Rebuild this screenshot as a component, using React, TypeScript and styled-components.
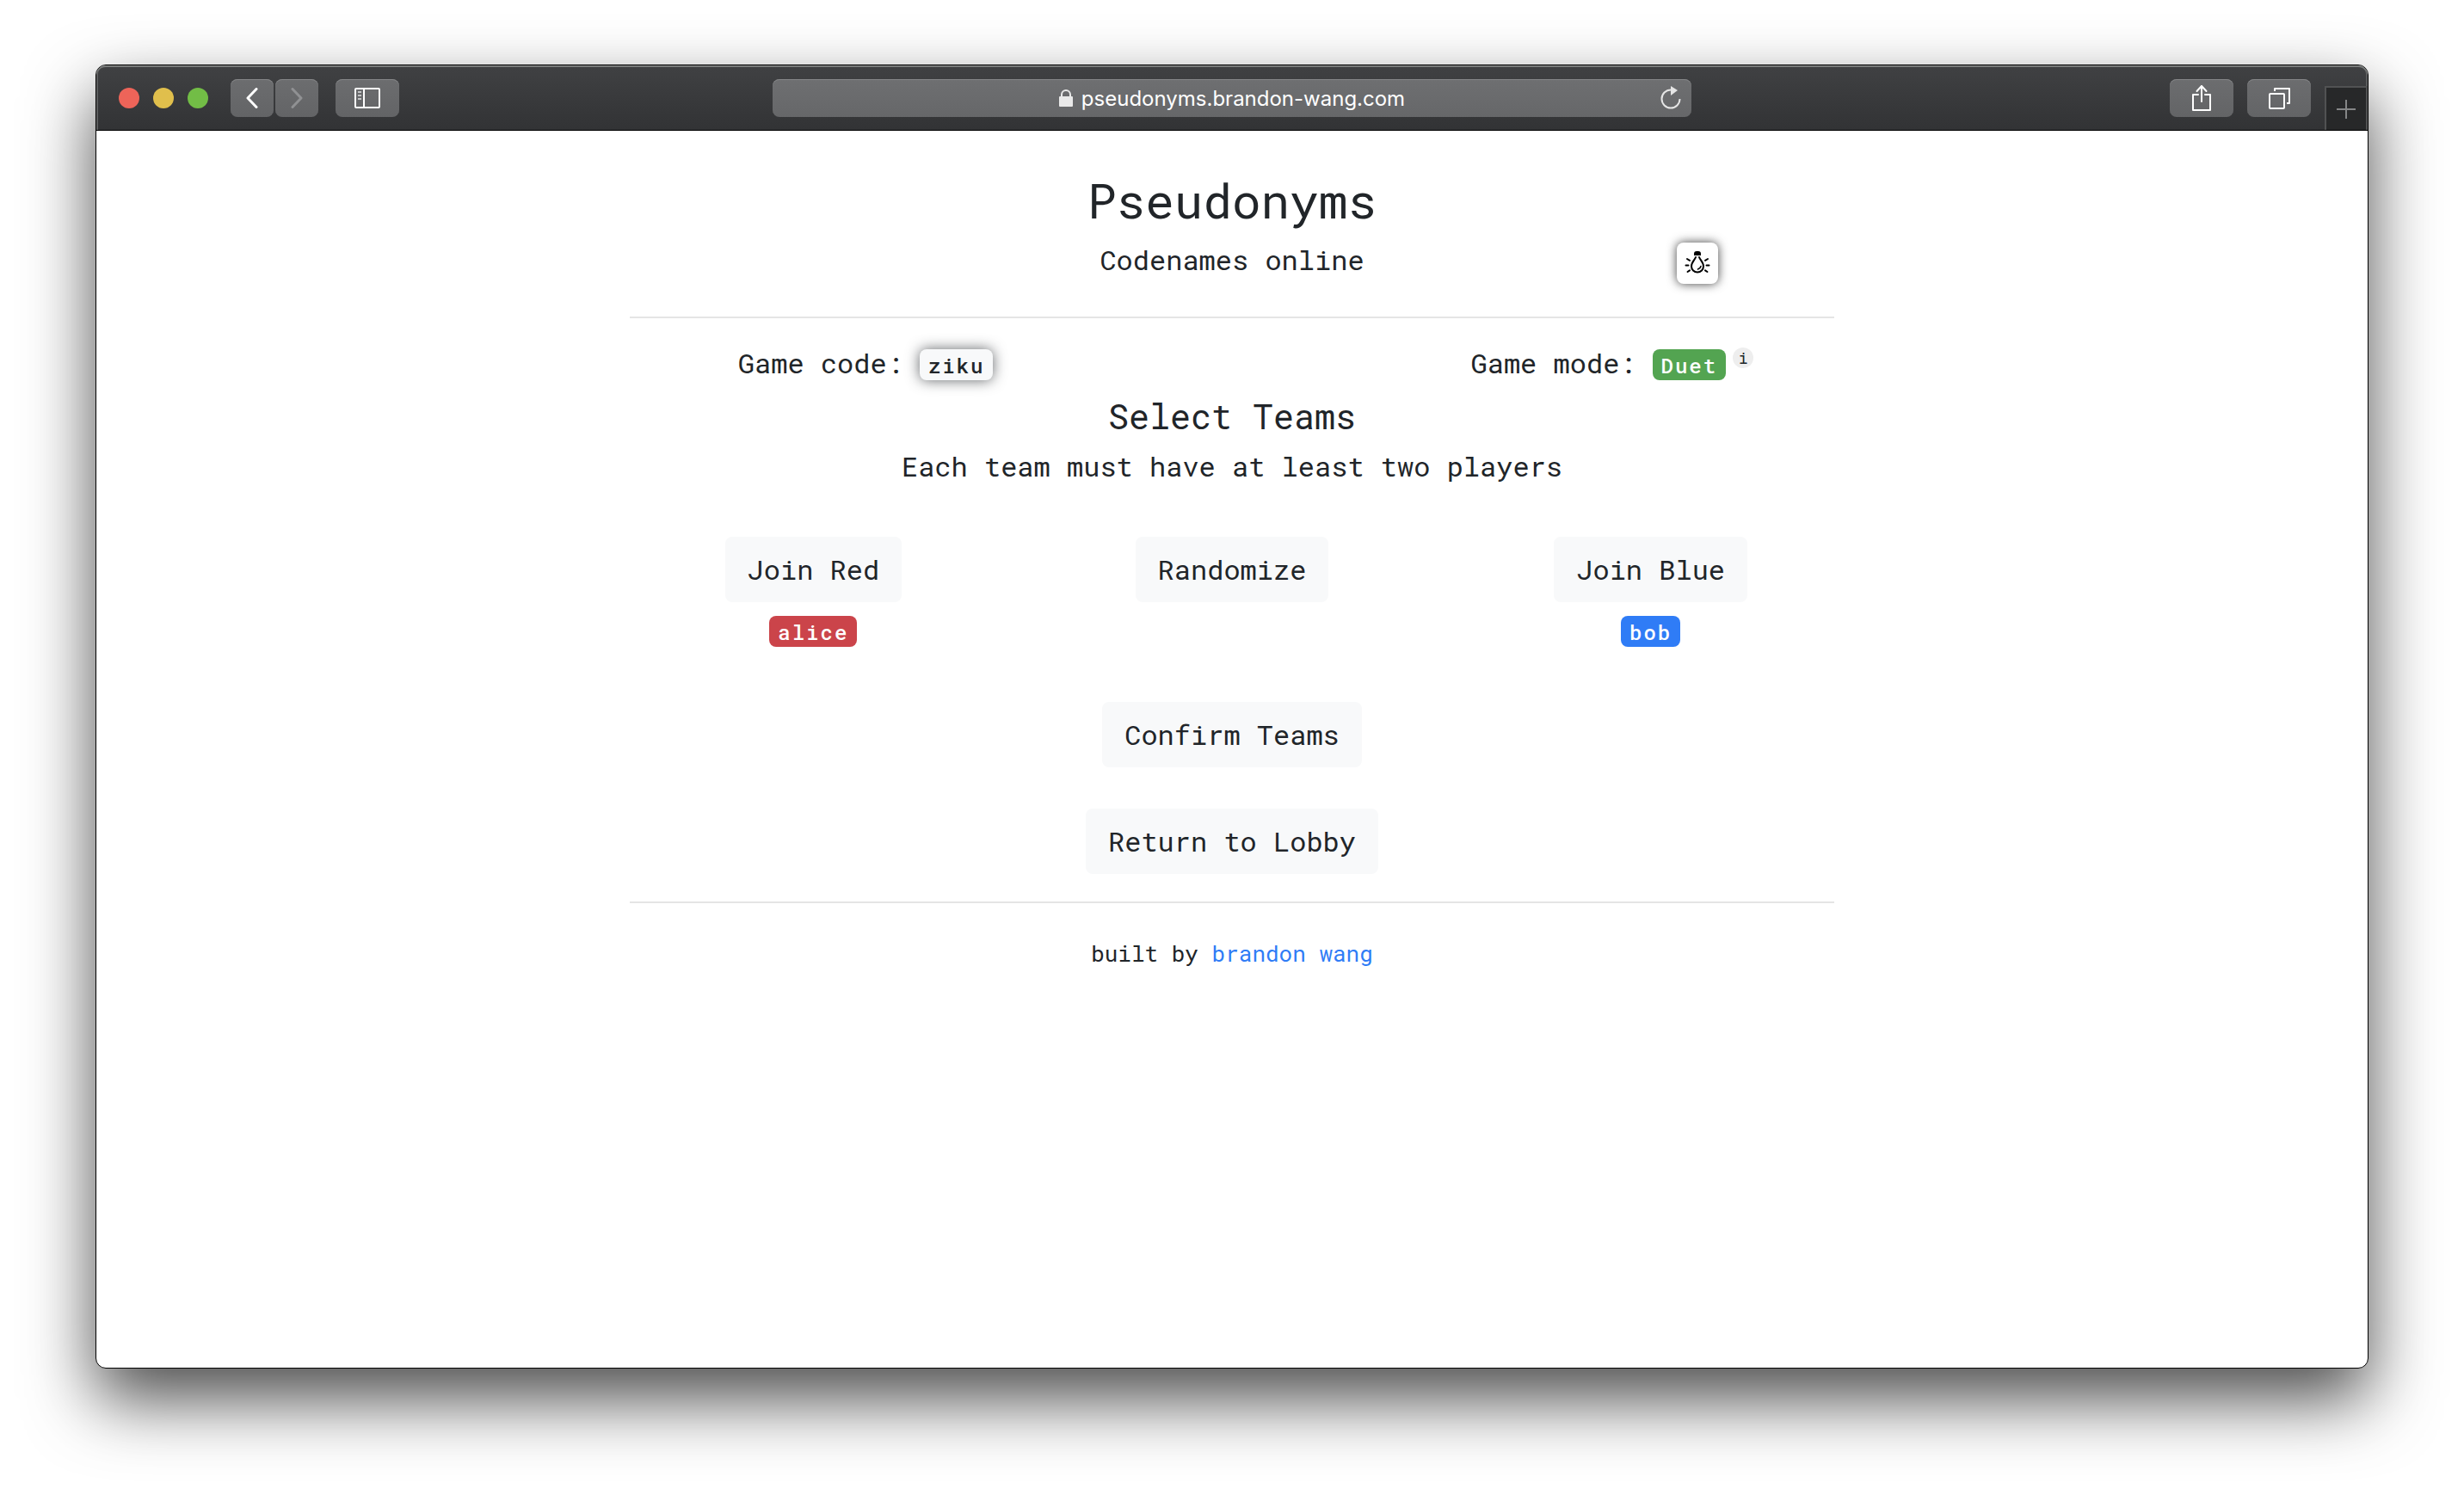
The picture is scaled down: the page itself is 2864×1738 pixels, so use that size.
import React from "react";
import styled, { createGlobalStyle } from "styled-components";

const mono = `"Roboto Mono", "Noto Sans Mono", "DejaVu Sans Mono", monospace`;

const GlobalStyle = createGlobalStyle`
  *, *::before, *::after { box-sizing: border-box; }
  body {
    margin: 0;
    background: #fff;
    color: #212529;
    font-family: ${mono};
    font-size: 32px;
    line-height: 48px;
  }
  button, input { font: inherit; color: inherit; }
`;

const Desktop = styled.div`
  display: flex;
  min-height: 100vh;
  padding: 75px 111px 147px;
`;

const Window = styled.div`
  position: relative;
  flex: 1;
  display: flex;
  flex-direction: column;
  border: 1px solid #000;
  border-radius: 12px;
  background: #fff;
  box-shadow: 0 36px 80px rgba(0, 0, 0, 0.7);
`;

const Toolbar = styled.header`
  display: grid;
  grid-template-columns: 1fr minmax(0, 1068px) 1fr;
  align-items: center;
  height: 76px;
  border-bottom: 1px solid #000;
  border-radius: 11px 11px 0 0;
  background: linear-gradient(#404143, #323335);
  box-shadow: inset 0 2px #7a7c7b, inset 2px 0 #5c5d5e, inset -2px 0 #5c5d5e;
`;

const ToolGroup = styled.div<{ $end?: boolean }>`
  display: flex;
  align-items: center;
  align-self: stretch;
  justify-content: ${(p) => (p.$end ? "flex-end" : "flex-start")};
  gap: 16px;
  padding-left: 26px;
  ${(p) => p.$end && "padding: 0;"}
`;

const Light = styled.button<{ $color: string }>`
  width: 24px;
  height: 24px;
  padding: 0;
  border: 0;
  border-radius: 50%;
  background: ${(p) => p.$color};
`;

const NavPair = styled.div`
  display: flex;
  gap: 2px;
  margin: 0 4px 0 10px;
`;

const ToolButton = styled.button<{ $wide?: boolean }>`
  display: flex;
  align-items: center;
  justify-content: center;
  width: ${(p) => (p.$wide ? 74 : 50)}px;
  height: 44px;
  padding: 0;
  border: 0;
  border-radius: 8px;
  background: linear-gradient(#6c6d6f, #636466);
  box-shadow: inset 0 1px #858688;
  color: #fff;
`;

const NewTab = styled.button`
  display: flex;
  align-items: center;
  justify-content: center;
  align-self: flex-end;
  width: 50px;
  height: 51px;
  padding: 0;
  border: solid #515253;
  border-width: 2px 2px 0 2px;
  background: #272829;
  color: #858687;
`;

const AddressBar = styled.div`
  display: grid;
  grid-template-columns: 1fr auto 1fr;
  align-items: center;
  height: 44px;
  padding: 0 10px;
  border-radius: 8px;
  background: linear-gradient(#6e6f71, #666769);
  box-shadow: inset 0 1px #858688;
  color: #fff;
`;

const AddressLabel = styled.label`
  grid-column: 2;
  display: flex;
  align-items: center;
  gap: 10px;
`;

const AddressInput = styled.input`
  field-sizing: content;
  padding: 2px 0 0;
  border: 0;
  outline: 0;
  background: none;
  font-family: Inter, Roboto, sans-serif;
  font-size: 24px;
  line-height: 32px;
`;

const Reload = styled.button`
  display: flex;
  justify-self: end;
  padding: 0;
  border: 0;
  background: none;
`;

const Page = styled.main`
  width: 100%;
  max-width: 1400px;
  margin: 0 auto;
  padding-top: 46px;
  text-align: center;
`;

const Title = styled.h1`
  margin: 0 0 12px;
  font-size: 56px;
  font-weight: 400;
  line-height: 68px;
`;

const SubtitleRow = styled.div`
  display: grid;
  grid-template-columns: 1fr auto 1fr;
  align-items: start;
`;

const Text = styled.p`
  margin: 0;
`;

const Subtitle = styled(Text)`
  grid-column: 2;
`;

const BulbButton = styled.button`
  display: block;
  justify-self: end;
  width: 48px;
  height: 48px;
  margin: 4px 135px 0 0;
  padding: 0;
  border: 0;
  border-radius: 8px;
  background: #fff;
  color: #000;
  box-shadow: 0 0 12px rgba(0, 0, 0, 0.75);
`;

const Rule = styled.hr`
  height: 2px;
  margin: 0;
  border: 0;
  background: #e5e5e5;
`;

const Header = styled.div`
  padding-bottom: 38px;
`;

const Info = styled.div`
  display: grid;
  grid-template-columns: 5fr 2fr 5fr;
  margin: 0 -30px;
  padding: 28px 0 14px;
`;

const InfoItem = styled.div<{ $column: number }>`
  grid-column: ${(p) => p.$column};
  display: flex;
  align-items: center;
  justify-content: center;
  gap: 19px;
`;

const tones = {
  light: "background: #f8f9fa; color: #212529;",
  green: "background: #53a451; color: #fff;",
  red: "background: #cb444a; color: #fff;",
  blue: "background: #2f7cf6; color: #fff;",
};

const Badge = styled.span<{ $tone: keyof typeof tones; $raised?: boolean }>`
  position: relative;
  display: inline-block;
  height: 36px;
  margin-top: 4px;
  padding: 0 10px;
  border-radius: 8px;
  font-size: 24px;
  font-weight: 500;
  line-height: 38px;
  letter-spacing: 2px;
  ${(p) => tones[p.$tone]}
  ${(p) => p.$raised && "box-shadow: 0 0 16px rgba(33, 37, 41, 0.7);"}
`;

const InfoDot = styled.button`
  position: absolute;
  top: -2px;
  left: calc(100% + 8px);
  width: 24px;
  height: 24px;
  padding: 0;
  border: 0;
  border-radius: 50%;
  background: #eee;
  color: #212529;
  font-size: 18px;
  font-weight: 400;
  line-height: 24px;
`;

const Heading = styled.h2`
  margin: 0 0 10px;
  font-size: 40px;
  font-weight: 400;
  line-height: 48px;
`;

const Teams = styled.div`
  display: grid;
  grid-template-columns: repeat(3, 1fr);
  margin: 0 -30px;
  padding: 58px 0 64px;
`;

const Team = styled.div`
  display: flex;
  flex-direction: column;
  align-items: center;
  gap: 12px;
`;

const Button = styled.button`
  padding: 12px 24px;
  border: 2px solid #f8f9fa;
  border-radius: 8px;
  background: #f8f9fa;
`;

const Actions = styled.div`
  display: flex;
  flex-direction: column;
  align-items: center;
  gap: 48px;
  padding-bottom: 32px;
`;

const Footer = styled.footer`
  padding-top: 38px;
  font-size: 26px;
  line-height: 40px;
`;

const Link = styled.a`
  color: #2f7cf6;
  text-decoration: none;
`;

const Bulb = () => (
  <svg width="48" height="48" viewBox="0 0 48 48" fill="none" stroke="currentColor" strokeWidth="2" strokeLinecap="round">
    <path d="M20 15v-2q0-3 3-3h2q3 0 3 3v2z" fill="currentColor" stroke="none" />
    <path d="M22 17C21 20 17 23 17 27.500a7 7 0 0 0 14 0C31 23 27 20 26 17" />
    <path d="M28 27.500q-.5 2.500-3.500 3.500" strokeWidth="1.500" />
    <path d="M10.500 26.500h3M34.500 26.500h3M12 19l3 1.800M36 19l-3 1.800M12.500 34l2.500-1.700M35.500 34l-2.500-1.700" />
  </svg>
);

export default function App() {
  return (
    <>
      <GlobalStyle />
      <Desktop>
        <Window>
          <Toolbar>
            <ToolGroup>
              <Light $color="#ed6459" aria-label="Close" />
              <Light $color="#e0bf4c" aria-label="Minimize" />
              <Light $color="#72bd46" aria-label="Zoom" />
              <NavPair>
                <ToolButton aria-label="Back">
                  <svg width="16" height="24" viewBox="0 0 16 24" fill="none" stroke="currentColor" strokeWidth="3" strokeLinecap="round" strokeLinejoin="round">
                    <path d="M13 1.500 3 12l10 10.500" />
                  </svg>
                </ToolButton>
                <ToolButton aria-label="Forward">
                  <svg width="16" height="24" viewBox="0 0 16 24" fill="none" stroke="#909193" strokeWidth="3" strokeLinecap="round" strokeLinejoin="round">
                    <path d="m3 1.500 10 10.500L3 22.500" />
                  </svg>
                </ToolButton>
              </NavPair>
              <ToolButton $wide aria-label="Sidebar">
                <svg width="30" height="24" viewBox="0 0 30 24" fill="none" stroke="currentColor" strokeWidth="2">
                  <rect x="1" y="1" width="28" height="22" rx="1" />
                  <path d="M11 1v22" />
                  <path d="M4 5h4M4 9h4M4 13h4" stroke="#c4c5c6" />
                </svg>
              </ToolButton>
            </ToolGroup>
            <AddressBar>
              <AddressLabel>
                <svg width="16" height="20" viewBox="0 0 16 20" fill="#e9e9e9">
                  <rect y="8" width="16" height="12" rx="1" />
                  <path d="M3 9V6a5 5 0 0 1 10 0v3" fill="none" stroke="#e9e9e9" strokeWidth="2" />
                </svg>
                <AddressInput aria-label="Address" defaultValue="pseudonyms.brandon-wang.com" />
              </AddressLabel>
              <Reload aria-label="Reload">
                <svg width="28" height="32" viewBox="0 0 28 32">
                  <path d="M14 6.500A10.500 10.500 0 1 0 24.500 17" fill="none" stroke="#e5e5e5" strokeWidth="2" />
                  <path d="M14 2v11l8-6z" fill="#e5e5e5" />
                </svg>
              </Reload>
            </AddressBar>
            <ToolGroup $end>
              <ToolButton $wide aria-label="Share">
                <svg width="24" height="32" viewBox="0 0 24 32" fill="none" stroke="currentColor" strokeWidth="2" strokeLinecap="round" strokeLinejoin="round">
                  <path d="M8 12H2v18h20V12h-6M12 20V2M6.500 8 12 2l5.500 6" />
                </svg>
              </ToolButton>
              <ToolButton $wide aria-label="Tabs">
                <svg width="26" height="26" viewBox="0 0 26 26" fill="none" stroke="currentColor" strokeWidth="2" strokeLinejoin="round">
                  <rect x="2" y="8" width="17" height="17" rx="1" />
                  <path d="M8 5V2h17v17h-3" />
                </svg>
              </ToolButton>
              <NewTab aria-label="New tab">
                <svg width="22" height="22" viewBox="0 0 22 22" stroke="currentColor" strokeWidth="2">
                  <path d="M11 0v22M0 11h22" />
                </svg>
              </NewTab>
            </ToolGroup>
          </Toolbar>

          <Page>
            <Header>
              <Title>Pseudonyms</Title>
              <SubtitleRow>
                <Subtitle>Codenames online</Subtitle>
                <BulbButton aria-label="Toggle theme">
                  <Bulb />
                </BulbButton>
              </SubtitleRow>
            </Header>
            <Rule />
            <Info>
              <InfoItem $column={1}>
                <span>Game code:</span>
                <Badge $tone="light" $raised>ziku</Badge>
              </InfoItem>
              <InfoItem $column={3}>
                <span>Game mode:</span>
                <Badge $tone="green">
                  Duet
                  <InfoDot>i</InfoDot>
                </Badge>
              </InfoItem>
            </Info>
            <Heading>Select Teams</Heading>
            <Text>Each team must have at least two players</Text>
            <Teams>
              <Team>
                <Button>Join Red</Button>
                <Badge $tone="red">alice</Badge>
              </Team>
              <Team>
                <Button>Randomize</Button>
              </Team>
              <Team>
                <Button>Join Blue</Button>
                <Badge $tone="blue">bob</Badge>
              </Team>
            </Teams>
            <Actions>
              <Button>Confirm Teams</Button>
              <Button>Return to Lobby</Button>
            </Actions>
            <Rule />
            <Footer>
              built by <Link href="https://brandon-wang.com">brandon wang</Link>
            </Footer>
          </Page>
        </Window>
      </Desktop>
    </>
  );
}
